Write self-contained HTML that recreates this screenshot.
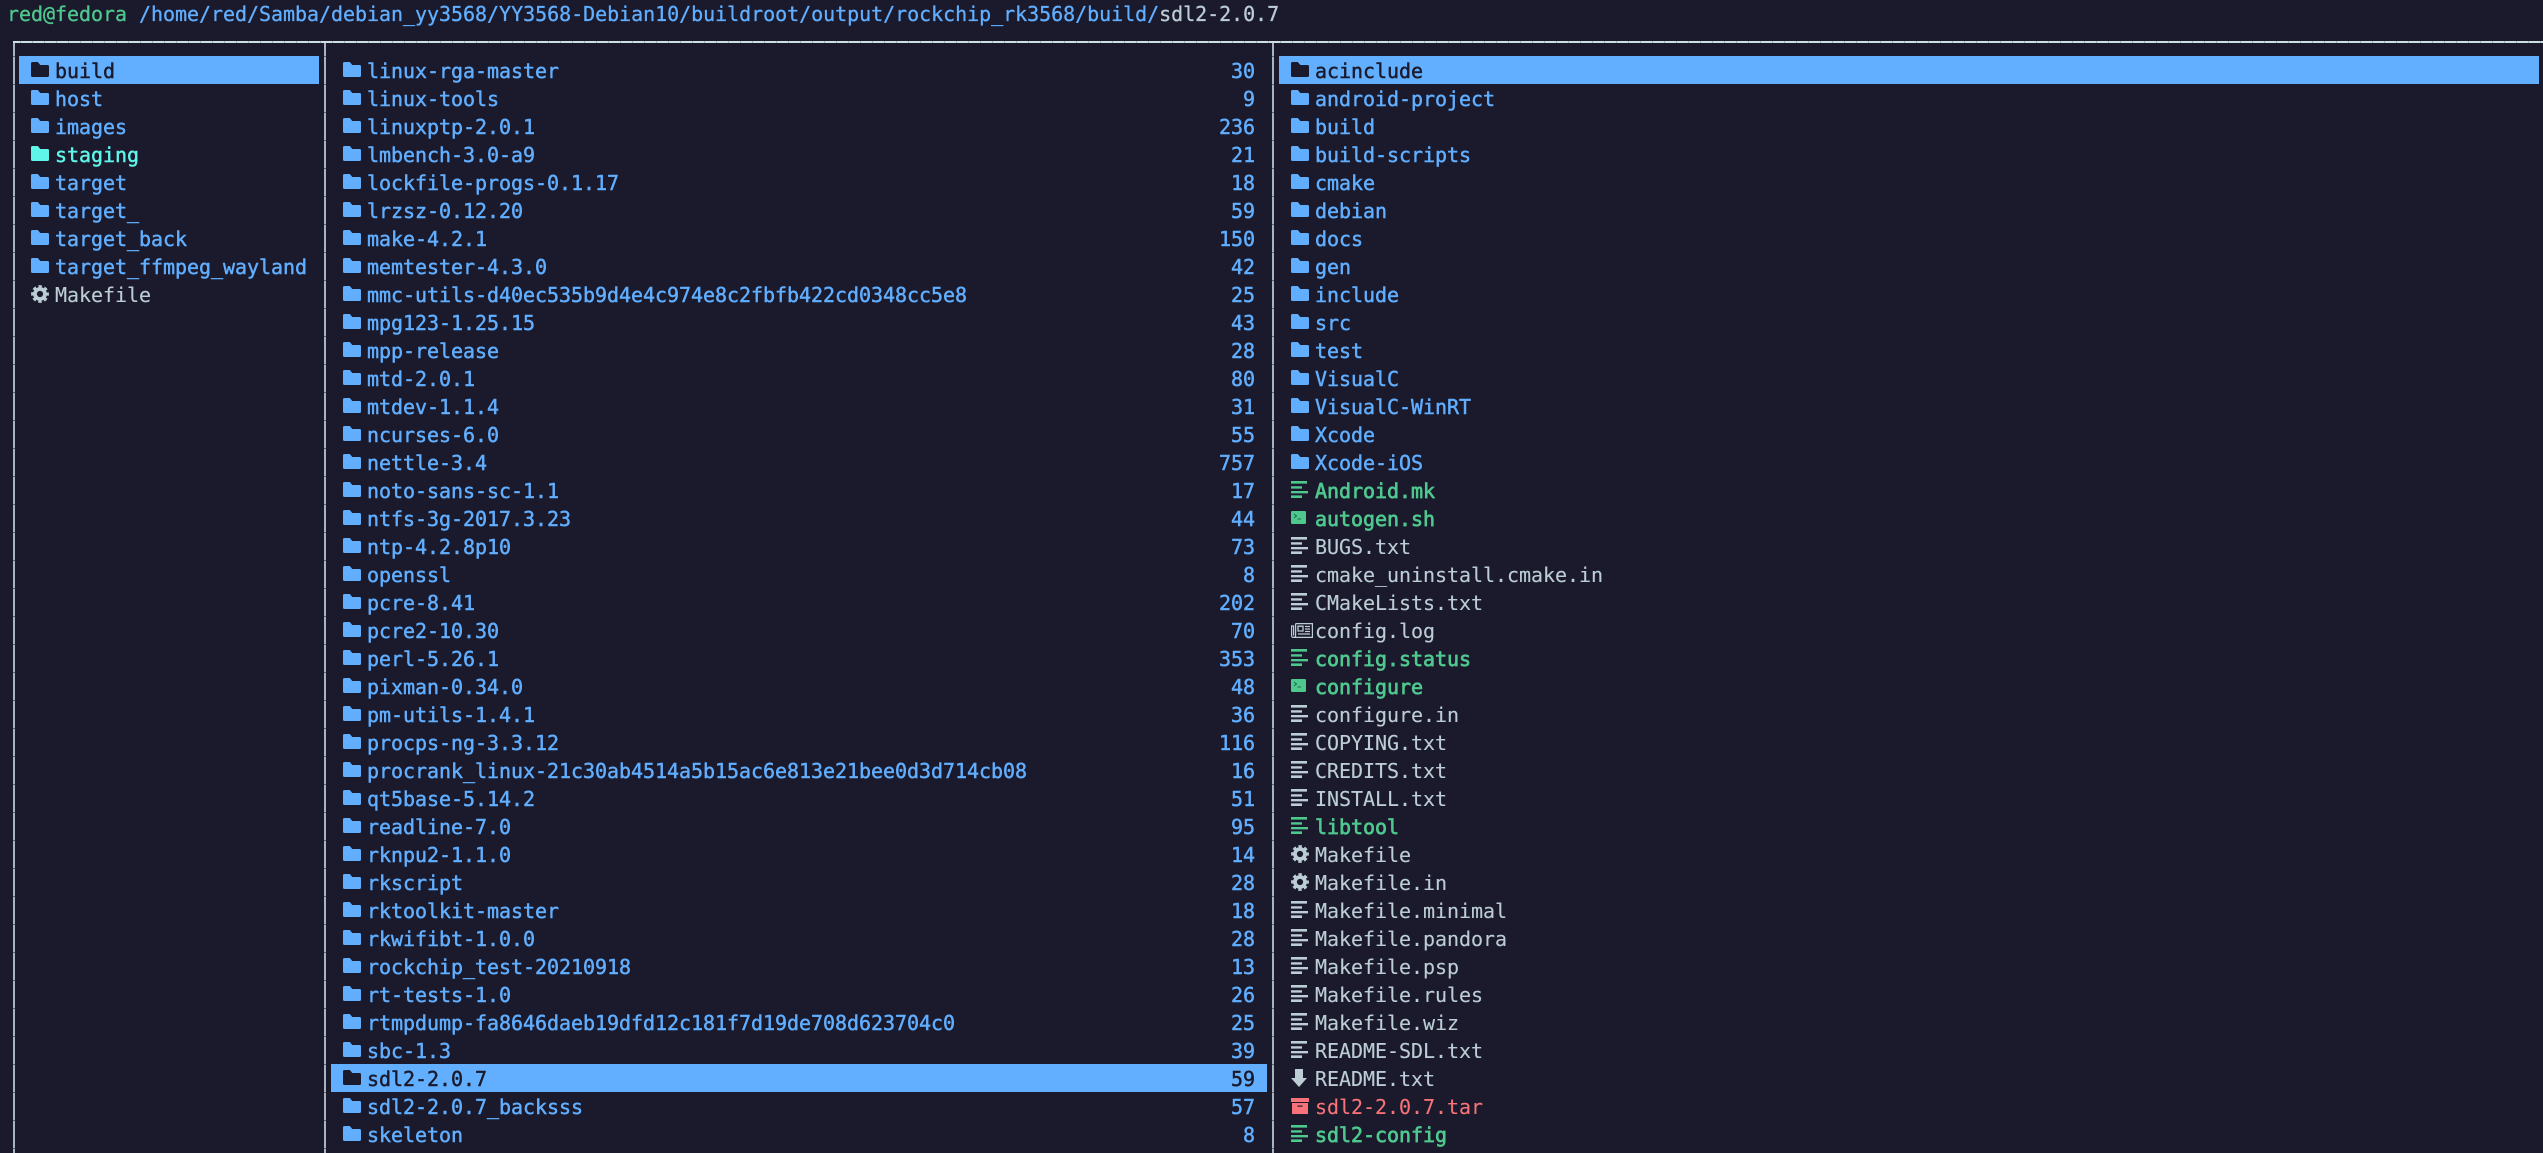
<!DOCTYPE html>
<html><head><meta charset="utf-8"><style>
html,body{margin:0;padding:0;background:#1a1a2c;width:2543px;height:1153px;overflow:hidden}
body{position:relative;font:20px/28px "DejaVu Sans Mono","Liberation Mono",monospace;letter-spacing:-.04px;color:#bccdd5}
#h{position:absolute;left:7px;top:0;white-space:pre;height:28px;line-height:28px;-webkit-text-stroke:.3px}
#h b{font-weight:normal;color:#4fc88e}#h i{font-style:normal;color:#61aeff}
.t{position:absolute;left:13px;right:0;top:41px;height:2px;background:repeating-linear-gradient(90deg,#a3b0b8 0 1px,#cfdfe6 1px 12px);background-position-x:7px}
.v{position:absolute;top:43px;bottom:0;width:2px;background:repeating-linear-gradient(180deg,#5d6670 0 1px,#a7b5bc 1px 28px);background-position-y:13px}
.p{position:absolute;top:56px}
.r{position:relative;height:28px;line-height:30px;padding-left:36px;white-space:pre;-webkit-text-stroke:.12px}
.r svg{position:absolute;overflow:visible}
.d{color:#61aeff;-webkit-text-stroke:.45px}
.s{color:#5ff5e9;-webkit-text-stroke:.45px}
.x{color:#4fc88e;-webkit-text-stroke:.7px}
.z{color:#f87377}
.c{background:#62aeff;color:#1a1a2c;-webkit-text-stroke:.45px}
.r u{position:absolute;right:12px;top:0;text-decoration:none}
.f{left:12px;top:6px;width:18px;height:15px}
.l{left:12px;top:5px;width:17px;height:17px}
.g{left:12px;top:5px;width:18px;height:18px}
.m{left:12px;top:7px;width:15px;height:13px}
.n{left:12px;top:7px;width:22px;height:15px}
.a{left:12px;top:5px;width:16px;height:18px}
.b{left:12px;top:6px;width:18px;height:16px}
</style></head><body>
<svg width="0" height="0" style="position:absolute"><defs>
<symbol id="f" viewBox="0 0 18 15"><path fill="currentColor" d="M0 1.5Q0 0 1.5 0H6.8L9.3 3H16.5Q18 3 18 4.5V13.5Q18 15 16.5 15H1.5Q0 15 0 13.5Z"/></symbol>
<symbol id="l" viewBox="0 0 17 17"><path fill="currentColor" d="M0 0H16V2.6H0ZM0 5.2H11V7.6H0ZM0 10H17V12.4H0ZM0 14.4H11V17H0Z"/></symbol>
<symbol id="g" viewBox="-9 -9 18 18"><circle r="5" fill="none" stroke="currentColor" stroke-width="3.8"/><circle r="7.4" fill="none" stroke="currentColor" stroke-width="3" stroke-dasharray="3.3 2.5" stroke-dashoffset="1.65"/></symbol>
<symbol id="m" viewBox="0 0 15 13"><rect width="15" height="13" rx="1.2" fill="currentColor"/><path fill="none" stroke="#1a6a50" stroke-width="1" d="M3 3L5.5 5L3 7M6.5 8H10"/></symbol>
<symbol id="n" viewBox="0 0 22 15"><path fill="none" stroke="currentColor" stroke-width="1.2" d="M4.6 .6H21.4V14.4H2.5Q.6 14.4 .6 12.5V3H2.6V12.5M4.6 .6V12.5Q4.6 14.4 2.5 14.4"/><path fill="none" stroke="currentColor" stroke-width="1.3" d="M7 3.2H12V8H7ZM14 3.5H19M14 6H19M14 8.5H19M7 11H19"/></symbol>
<symbol id="a" viewBox="0 0 16 18"><path fill="currentColor" d="M4 0H12V9H16L8 18L0 9H4Z"/></symbol>
<symbol id="b" viewBox="0 0 18 16"><path fill="currentColor" d="M0 0H18V4H0ZM1 5H17V16H1Z"/><rect x="6.5" y="7.5" width="5" height="1.2" fill="#1a1a2c"/></symbol>
</defs></svg>
<div id="h"><b>red@fedora</b> <i>/home/red/Samba/debian_yy3568/YY3568-Debian10/buildroot/output/rockchip_rk3568/build/</i>sdl2-2.0.7</div>
<div class="t"></div>
<div class="v" style="left:13px"></div><div class="v" style="left:324px"></div><div class="v" style="left:1272px"></div>

<div class="p" style="left:19px;width:300px">
<div class="r c"><svg class="f"><use href="#f"/></svg>build</div>
<div class="r d"><svg class="f"><use href="#f"/></svg>host</div>
<div class="r d"><svg class="f"><use href="#f"/></svg>images</div>
<div class="r s"><svg class="f"><use href="#f"/></svg>staging</div>
<div class="r d"><svg class="f"><use href="#f"/></svg>target</div>
<div class="r d"><svg class="f"><use href="#f"/></svg>target_</div>
<div class="r d"><svg class="f"><use href="#f"/></svg>target_back</div>
<div class="r d"><svg class="f"><use href="#f"/></svg>target_ffmpeg_wayland</div>
<div class="r"><svg class="g"><use href="#g"/></svg>Makefile</div>
</div>

<div class="p" style="left:331px;width:936px">
<div class="r d"><svg class="f"><use href="#f"/></svg>linux-rga-master<u>30</u></div>
<div class="r d"><svg class="f"><use href="#f"/></svg>linux-tools<u>9</u></div>
<div class="r d"><svg class="f"><use href="#f"/></svg>linuxptp-2.0.1<u>236</u></div>
<div class="r d"><svg class="f"><use href="#f"/></svg>lmbench-3.0-a9<u>21</u></div>
<div class="r d"><svg class="f"><use href="#f"/></svg>lockfile-progs-0.1.17<u>18</u></div>
<div class="r d"><svg class="f"><use href="#f"/></svg>lrzsz-0.12.20<u>59</u></div>
<div class="r d"><svg class="f"><use href="#f"/></svg>make-4.2.1<u>150</u></div>
<div class="r d"><svg class="f"><use href="#f"/></svg>memtester-4.3.0<u>42</u></div>
<div class="r d"><svg class="f"><use href="#f"/></svg>mmc-utils-d40ec535b9d4e4c974e8c2fbfb422cd0348cc5e8<u>25</u></div>
<div class="r d"><svg class="f"><use href="#f"/></svg>mpg123-1.25.15<u>43</u></div>
<div class="r d"><svg class="f"><use href="#f"/></svg>mpp-release<u>28</u></div>
<div class="r d"><svg class="f"><use href="#f"/></svg>mtd-2.0.1<u>80</u></div>
<div class="r d"><svg class="f"><use href="#f"/></svg>mtdev-1.1.4<u>31</u></div>
<div class="r d"><svg class="f"><use href="#f"/></svg>ncurses-6.0<u>55</u></div>
<div class="r d"><svg class="f"><use href="#f"/></svg>nettle-3.4<u>757</u></div>
<div class="r d"><svg class="f"><use href="#f"/></svg>noto-sans-sc-1.1<u>17</u></div>
<div class="r d"><svg class="f"><use href="#f"/></svg>ntfs-3g-2017.3.23<u>44</u></div>
<div class="r d"><svg class="f"><use href="#f"/></svg>ntp-4.2.8p10<u>73</u></div>
<div class="r d"><svg class="f"><use href="#f"/></svg>openssl<u>8</u></div>
<div class="r d"><svg class="f"><use href="#f"/></svg>pcre-8.41<u>202</u></div>
<div class="r d"><svg class="f"><use href="#f"/></svg>pcre2-10.30<u>70</u></div>
<div class="r d"><svg class="f"><use href="#f"/></svg>perl-5.26.1<u>353</u></div>
<div class="r d"><svg class="f"><use href="#f"/></svg>pixman-0.34.0<u>48</u></div>
<div class="r d"><svg class="f"><use href="#f"/></svg>pm-utils-1.4.1<u>36</u></div>
<div class="r d"><svg class="f"><use href="#f"/></svg>procps-ng-3.3.12<u>116</u></div>
<div class="r d"><svg class="f"><use href="#f"/></svg>procrank_linux-21c30ab4514a5b15ac6e813e21bee0d3d714cb08<u>16</u></div>
<div class="r d"><svg class="f"><use href="#f"/></svg>qt5base-5.14.2<u>51</u></div>
<div class="r d"><svg class="f"><use href="#f"/></svg>readline-7.0<u>95</u></div>
<div class="r d"><svg class="f"><use href="#f"/></svg>rknpu2-1.1.0<u>14</u></div>
<div class="r d"><svg class="f"><use href="#f"/></svg>rkscript<u>28</u></div>
<div class="r d"><svg class="f"><use href="#f"/></svg>rktoolkit-master<u>18</u></div>
<div class="r d"><svg class="f"><use href="#f"/></svg>rkwifibt-1.0.0<u>28</u></div>
<div class="r d"><svg class="f"><use href="#f"/></svg>rockchip_test-20210918<u>13</u></div>
<div class="r d"><svg class="f"><use href="#f"/></svg>rt-tests-1.0<u>26</u></div>
<div class="r d"><svg class="f"><use href="#f"/></svg>rtmpdump-fa8646daeb19dfd12c181f7d19de708d623704c0<u>25</u></div>
<div class="r d"><svg class="f"><use href="#f"/></svg>sbc-1.3<u>39</u></div>
<div class="r c"><svg class="f"><use href="#f"/></svg>sdl2-2.0.7<u>59</u></div>
<div class="r d"><svg class="f"><use href="#f"/></svg>sdl2-2.0.7_backsss<u>57</u></div>
<div class="r d"><svg class="f"><use href="#f"/></svg>skeleton<u>8</u></div>
</div>

<div class="p" style="left:1279px;width:1260px">
<div class="r c"><svg class="f"><use href="#f"/></svg>acinclude</div>
<div class="r d"><svg class="f"><use href="#f"/></svg>android-project</div>
<div class="r d"><svg class="f"><use href="#f"/></svg>build</div>
<div class="r d"><svg class="f"><use href="#f"/></svg>build-scripts</div>
<div class="r d"><svg class="f"><use href="#f"/></svg>cmake</div>
<div class="r d"><svg class="f"><use href="#f"/></svg>debian</div>
<div class="r d"><svg class="f"><use href="#f"/></svg>docs</div>
<div class="r d"><svg class="f"><use href="#f"/></svg>gen</div>
<div class="r d"><svg class="f"><use href="#f"/></svg>include</div>
<div class="r d"><svg class="f"><use href="#f"/></svg>src</div>
<div class="r d"><svg class="f"><use href="#f"/></svg>test</div>
<div class="r d"><svg class="f"><use href="#f"/></svg>VisualC</div>
<div class="r d"><svg class="f"><use href="#f"/></svg>VisualC-WinRT</div>
<div class="r d"><svg class="f"><use href="#f"/></svg>Xcode</div>
<div class="r d"><svg class="f"><use href="#f"/></svg>Xcode-iOS</div>
<div class="r x"><svg class="l"><use href="#l"/></svg>Android.mk</div>
<div class="r x"><svg class="m"><use href="#m"/></svg>autogen.sh</div>
<div class="r"><svg class="l"><use href="#l"/></svg>BUGS.txt</div>
<div class="r"><svg class="l"><use href="#l"/></svg>cmake_uninstall.cmake.in</div>
<div class="r"><svg class="l"><use href="#l"/></svg>CMakeLists.txt</div>
<div class="r"><svg class="n"><use href="#n"/></svg>config.log</div>
<div class="r x"><svg class="l"><use href="#l"/></svg>config.status</div>
<div class="r x"><svg class="m"><use href="#m"/></svg>configure</div>
<div class="r"><svg class="l"><use href="#l"/></svg>configure.in</div>
<div class="r"><svg class="l"><use href="#l"/></svg>COPYING.txt</div>
<div class="r"><svg class="l"><use href="#l"/></svg>CREDITS.txt</div>
<div class="r"><svg class="l"><use href="#l"/></svg>INSTALL.txt</div>
<div class="r x"><svg class="l"><use href="#l"/></svg>libtool</div>
<div class="r"><svg class="g"><use href="#g"/></svg>Makefile</div>
<div class="r"><svg class="g"><use href="#g"/></svg>Makefile.in</div>
<div class="r"><svg class="l"><use href="#l"/></svg>Makefile.minimal</div>
<div class="r"><svg class="l"><use href="#l"/></svg>Makefile.pandora</div>
<div class="r"><svg class="l"><use href="#l"/></svg>Makefile.psp</div>
<div class="r"><svg class="l"><use href="#l"/></svg>Makefile.rules</div>
<div class="r"><svg class="l"><use href="#l"/></svg>Makefile.wiz</div>
<div class="r"><svg class="l"><use href="#l"/></svg>README-SDL.txt</div>
<div class="r"><svg class="a"><use href="#a"/></svg>README.txt</div>
<div class="r z"><svg class="b"><use href="#b"/></svg>sdl2-2.0.7.tar</div>
<div class="r x"><svg class="l"><use href="#l"/></svg>sdl2-config</div>
</div>
</body></html>
